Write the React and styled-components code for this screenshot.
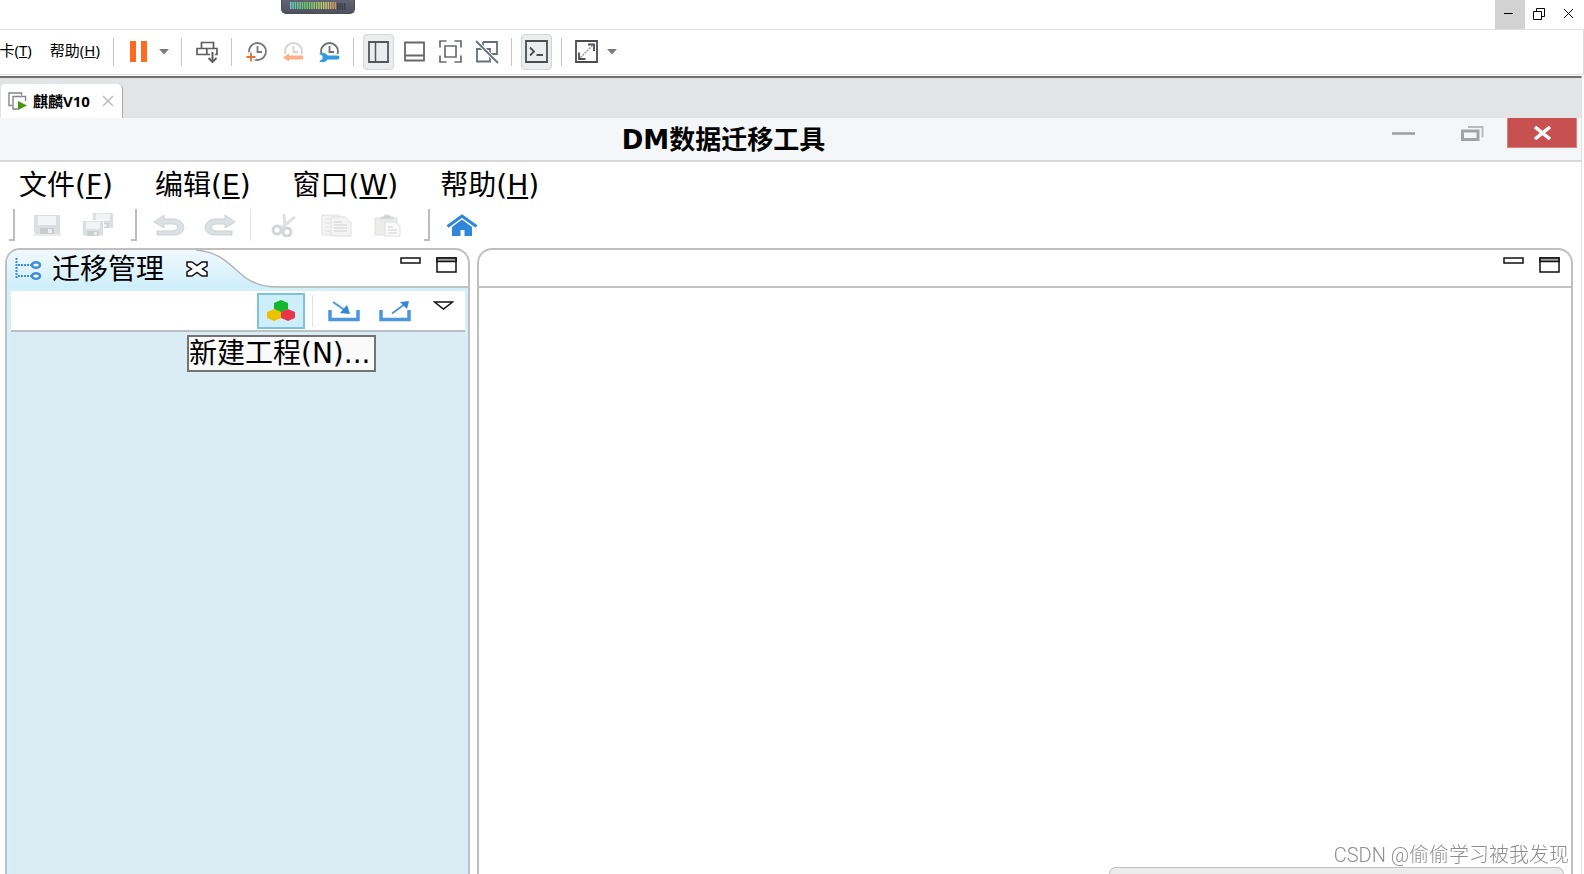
import styled, { createGlobalStyle } from 'styled-components';

const GlobalStyle = createGlobalStyle`
  * {
    box-sizing: border-box;
  }

  body {
    margin: 0;
    background: #fff;
    color: #000;
    overflow: hidden;
  }

  button {
    padding: 0;
    border: 0;
    background: none;
    color: inherit;
    font: inherit;
  }

  svg {
    display: block;
    flex: none;
  }
`;

const hostFont = '"Open Sans", "Noto Sans CJK SC", sans-serif';
const guestFont = '"DejaVu Sans", "Noto Sans CJK SC", sans-serif';

const Page = styled.div`
  display: flex;
  flex-direction: column;
  height: 100vh;
`;

/* host window */

const HostBar = styled.header`
  display: flex;
  justify-content: space-between;
  align-items: flex-start;
  height: 30px;
  padding-left: 281px;
  border-bottom: 1px solid #e2e2e4;
`;

const Meter = styled.div`
  height: 14px;
  padding: 2px 8px;
  border: 1px solid #4a4c58;
  border-top: 0;
  border-radius: 0 0 5px 5px;
  background: linear-gradient(#626473, #4f5160);
`;

const HostControls = styled.div`
  display: flex;
`;

const HostControl = styled.button`
  display: flex;
  align-items: center;
  justify-content: center;
  width: ${(p) => (p.$last ? 29 : 30)}px;
  height: 29px;
  padding: 0 3px 2px 0;
  background: ${(p) => (p.$hover ? '#d2d2d2' : 'transparent')};
`;

const HostToolbar = styled.div`
  display: flex;
  align-items: center;
  gap: 5px;
  height: 45px;
  border-bottom: 1px solid #dedede;
  border-right: 1px solid #dedede;
`;

const HostMenu = styled.nav`
  display: flex;
  justify-content: flex-end;
  gap: 18px;
  width: 100px;
  margin-right: 4px;
  padding-bottom: 4px;
  overflow: hidden;
  font: 15px/20px "Noto Sans", "Noto Sans CJK SC", sans-serif;

  button {
    flex: none;
  }
`;

const ToolDivider = styled.span`
  width: 1px;
  height: 28px;
  margin: 0 4px;
  background: #c6c6c6;
`;

const ToolButton = styled.button`
  display: flex;
  align-items: center;
  justify-content: center;
  width: 31px;
  height: 36px;
  padding-bottom: 1px;
  border: 1px solid ${(p) => (p.$pressed ? '#d3d5d6' : 'transparent')};
  border-radius: 4px;
  background: ${(p) => (p.$pressed ? '#ebeced' : 'transparent')};
`;

const CaretButton = styled.button`
  width: 13px;
  height: 36px;
`;

const HostBody = styled.div`
  display: flex;
  flex-direction: column;
  flex: 1;
  min-height: 0;
  margin: 1px 2px 0 0;
  border-top: 2px solid #707070;
  border-right: 1px solid #e2e2e2;
`;

const TabStrip = styled.div`
  display: flex;
  align-items: flex-end;
  height: 40px;
  padding-left: 1px;
  background: #e3e4e6;
`;

const VmTab = styled.div`
  display: flex;
  align-items: center;
  height: 34px;
  padding: 0 8px 0 7px;
  border-right: 1px solid #a9a9a9;
  border-radius: 4px 5px 0 0;
  background: #fff;
  font: bold 15px/20px ${hostFont};

  span {
    margin: 0 12px 0 6px;
  }
`;

/* guest application */

const TitleBar = styled.header`
  display: flex;
  align-items: flex-start;
  height: 44px;
  border-bottom: 2px solid #d8d8d8;
  background: #f4f6f8;
`;

const Title = styled.h1`
  flex: 1;
  margin: 0;
  padding-left: 78px;
  text-align: center;
  font: bold 26px/44px ${guestFont};
`;

const GuestControl = styled.button`
  display: flex;
  align-items: center;
  justify-content: center;
  width: ${(p) => (p.$danger ? 70 : 69)}px;
  height: 30px;
  margin-right: ${(p) => (p.$danger ? 4 : 0)}px;
  border: ${(p) => (p.$danger ? '1px solid #d98080' : 0)};
  border-top: 0;
  background: ${(p) => (p.$danger ? '#c75050' : 'transparent')};
`;

const GuestMenu = styled.nav`
  display: flex;
  gap: 42px;
  padding: 4px 19px 0;
  font: 28px/40px ${guestFont};

  u {
    text-decoration-thickness: 2px;
    text-underline-offset: 2px;
  }
`;

const IconBar = styled.div`
  display: flex;
  align-items: center;
  height: 42px;
  padding: 0 1px 4px;
`;

const Bracket = styled.span`
  width: 6px;
  height: 32px;
  margin: 0 6px 0 8px;
  border: solid #bdbdbd;
  border-width: 0 2px 2px 0;
`;

const Rule = styled.span`
  width: 1px;
  height: 32px;
  margin: ${(p) => (p.$spaced ? '0 3px 0 5px' : 0)};
  background: #e2e2e2;
`;

const IconButton = styled.button`
  display: flex;
  align-items: ${(p) => (p.$top ? 'flex-start' : 'center')};
  justify-content: center;
  width: ${(p) => p.$width || 51}px;
  height: 36px;
  padding-top: ${(p) => (p.$top ? 6 : 0)}px;
  border: 2px solid ${(p) => (p.$active ? '#7cc3dd' : 'transparent')};
  background: ${(p) => (p.$active ? '#cfeefb' : 'transparent')};
`;

const Workbench = styled.main`
  display: grid;
  grid-template-columns: minmax(0, 465fr) minmax(0, 1096fr);
  gap: 7px;
  flex: 1;
  min-height: 0;
  padding: 0 8px 0 5px;
`;

const Panel = styled.section`
  display: flex;
  flex-direction: column;
  border: 2px solid #bfbfbf;
  border-bottom: 0;
  border-radius: 15px 15px 0 0;
  background: #fff;
`;

const PanelHead = styled.div`
  display: flex;
  height: 38px;
`;

const PanelTab = styled.div`
  position: relative;
  display: flex;
  align-items: center;
  padding: 0 70px 0 8px;
  border-radius: 13px 0 0 0;
  background: linear-gradient(#f1f9fd, #cfeefb);
  font: 28px/36px ${guestFont};

  span {
    margin: 0 22px 0 10px;
    padding-top: 2px;
  }

  button {
    z-index: 1;
  }
`;

const TabEdge = styled.svg`
  position: absolute;
  top: 0;
  right: 0;
`;

const PanelActions = styled.div`
  display: flex;
  flex: 1;
  align-items: flex-start;
  justify-content: flex-end;
  gap: 15px;
  padding: 7px 11px 0 0;
  border-bottom: 2px solid #c2c2c2;
`;

const PanelBody = styled.div`
  display: flex;
  flex-direction: column;
  flex: 1;
  padding: 3px 3px 0 4px;
  background: #d3f0fb;
`;

const ViewToolbar = styled.div`
  display: flex;
  align-items: flex-start;
  justify-content: flex-end;
  height: 41px;
  padding: 2px 0 0;
  border-bottom: 2px solid #b9bfc2;
  background: #fff;
`;

const Tree = styled.div`
  position: relative;
  flex: 1;
  background: #daedf5;
`;

const Tooltip = styled.div`
  position: absolute;
  top: 3px;
  left: 176px;
  padding: 0 3px 0 0;
  border: 2px solid #747474;
  background: #fafafa;
  font: 28px/33px ${guestFont};
  white-space: nowrap;
`;

const Dock = styled.div`
  position: fixed;
  right: 20px;
  bottom: 0;
  width: 455px;
  height: 7px;
  border: 1px solid #c0c0c0;
  border-bottom: 0;
  border-radius: 10px 10px 0 0;
  background: #ececec;
`;

const Watermark = styled.div`
  position: fixed;
  right: 15px;
  bottom: 6px;
  color: #8e8e8e;
  font: 300 20px/26px Roboto, "Noto Sans CJK SC", sans-serif;
`;

const Caret = () => (
  <svg width="10" height="6">
    <path d="M0 0h10L5 5.5z" fill="#7b7b7b" />
  </svg>
);

const meterColor = (i) => {
  if (i > 19) return '#3e404c';
  return `hsl(${170 - i * 7.5} 50% 60%)`;
};

const MeterBars = () => (
  <svg width="56" height="8">
    {Array.from({ length: 24 }, (_, i) => (
      <rect key={i} x={i * 2.35} y={i > 19 ? 1 : 0} width="1.5" height="7" fill={meterColor(i)} />
    ))}
  </svg>
);

const SendKeys = () => (
  <svg width="22" height="22" fill="none" stroke="#5b5d60" strokeWidth="1.7">
    <path d="M5.5 7.5v-6h12v6M1 7.5h20v6H1zM10.8 7.5v6" />
    <path d="M16.5 12v9" stroke="#fff" strokeWidth="5" />
    <path d="M16.500 11v9" strokeWidth="2" />
    <path d="m12.500 17 4 4 4-4" strokeWidth="2" />
  </svg>
);

const Clock = ({ color }) => (
  <>
    <circle cx="11.500" cy="10.500" r="8.500" stroke={color} strokeWidth="1.800" />
    <path d="M11.500 5v6H16" stroke={color} strokeWidth="1.800" />
  </>
);

const SnapshotTake = () => (
  <svg width="22" height="22" fill="none">
    <Clock color="#77797b" />
    <path d="M0 16h10M5 11v10" stroke="#fff" strokeWidth="5" />
    <path d="M.5 16h9M5 11.500v9" stroke="#e3703a" strokeWidth="1.800" />
  </svg>
);

const SnapshotRevert = () => (
  <svg width="22" height="22" fill="none">
    <Clock color="#d2d3d4" />
    <path d="M0 13h22v9H0z" fill="#fff" />
    <path d="m1 16.500 6-4v2h14v4H7v2z" fill="#ffae88" />
  </svg>
);

const SnapshotManage = () => (
  <svg width="22" height="22" fill="none">
    <Clock color="#6d6f71" />
    <path d="M0 13h22v9H0z" fill="#fff" />
    <path
      d="M1 12.500c4-1.500 7-.5 8.500 2H19.500a2 2 0 0 1 0 4H9.500c-1.500 2.500-4.500 3.500-8.500 2l3.500-2.500v-3z"
      fill="#2f9be0"
    />
  </svg>
);

const SidePane = () => (
  <svg width="21" height="22" fill="none" stroke="#545659" strokeWidth="1.800">
    <path d="M1 1h19v20H1z" />
    <path d="M7.500 1v20" strokeWidth="1.500" />
  </svg>
);

const BottomPane = () => (
  <svg width="21" height="22" fill="none" stroke="#66686b" strokeWidth="1.800">
    <path d="M1 1.500h19v18H1zM1 14.500h19" />
  </svg>
);

const FullScreen = () => (
  <svg width="23" height="23" fill="none" stroke="#6a6c6f" strokeWidth="1.700">
    <path d="M1 7.500V1h6.500M15.500 1H22v6.500M22 15.500V22h-6.500M7.500 22H1v-6.500M6 6h11v11H6z" />
  </svg>
);

const Unity = () => (
  <svg width="24" height="24" fill="none" stroke="#64707a" strokeWidth="1.800">
    <path d="M8 2h14v12h-7M8 2v7H2v12.500h13V9H8" />
    <path d="m1 1 22 22" stroke="#fff" strokeWidth="4" />
    <path d="m1 1 22 22" strokeWidth="1.800" />
  </svg>
);

const Console = () => (
  <svg width="23" height="23" fill="none" stroke="#4b4d50" strokeWidth="1.800">
    <path d="M1 1h21v21H1z" />
    <path d="m5 7.500 4 4-4 4M11.500 15H18" />
  </svg>
);

const Stretch = () => (
  <svg width="23" height="23" fill="none" stroke="#4b4d50" strokeWidth="1.800">
    <path d="M1 1h21v21H1zM13 4.500h6V11M4 12.500V19h6.500" />
    <path d="m5.500 17.500 12-12" strokeWidth="1.500" strokeDasharray="2 1" stroke="#999" />
  </svg>
);

const VmIcon = () => (
  <svg width="19" height="18" fill="none" stroke="#858789" strokeWidth="1.400">
    <path d="M4 13.500H1V1h12.500v2.500" />
    <path d="M10 17H5V4.500h12.500V9" />
    <path d="m10 9 9 4.500-9 4.500z" fill="#45980f" stroke="none" />
  </svg>
);

const GuestRestore = () => (
  <svg width="23" height="15" fill="none">
    <path d="M7 1h14.500v10.500" stroke="#b9babb" strokeWidth="2" />
    <path d="M1.500 5h15.500v8.500H1.500z" stroke="#a2a3a4" strokeWidth="3" />
  </svg>
);

const FloppyShape = () => (
  <>
    <path d="M1 0h26v19H3l-2-2z" fill="#dcdee0" />
    <path d="M5 1h18v9H5z" fill="#f3f4f5" />
    <path d="M7 13h14v6H7z" fill="#c9cccf" />
    <path d="M15 14h4v4h-4z" fill="#eceeef" />
  </>
);

const Save = () => (
  <svg width="28" height="21">
    <FloppyShape />
    <path d="M0 20h28" stroke="#ececec" strokeWidth="2" />
  </svg>
);

const SaveAll = () => (
  <svg width="32" height="24">
    <g transform="translate(10 0) scale(.78)"><FloppyShape /></g>
    <g transform="translate(0 8) scale(.78)">
      <path d="M0-1h28v21H0z" fill="#fff" />
      <FloppyShape />
    </g>
  </svg>
);

const Undo = ({ flip }) => (
  <svg width="32" height="23" viewBox="0 0 32 23">
    <path
      transform={flip ? 'translate(32 0) scale(-1 1)' : undefined}
      d="M1 8 11 1v4h10c13 1 13 16 0 16H4v-4h16c6-1 6-7 0-7h-9v4z"
      fill="#dce0e2"
      stroke="#cdd1d4"
    />
  </svg>
);

const Cut = () => (
  <svg width="26" height="24" fill="none" stroke="#d3d6d8">
    <path d="m13 1 1 13M24 4 10 15" strokeWidth="3" stroke="#dfe1e3" />
    <circle cx="6" cy="17" r="4" strokeWidth="3" />
    <circle cx="16" cy="19" r="4" strokeWidth="3" />
  </svg>
);

const Copy = () => (
  <svg width="31" height="23" fill="#f4f4f4" stroke="#dfe0e1">
    <path d="M1 1h17v20H1zM4 5h5M4 9h5M4 13h5M4 17h5" />
    <path d="M10 3h14l6 5v14H10z" />
    <path d="M13 8h8M13 11h13M13 14h13M13 17h13" stroke="#d0d1d2" />
  </svg>
);

const Paste = () => (
  <svg width="27" height="23" fill="#ececeb" stroke="#dfe0e1">
    <path d="M1 4h22v17H1z" />
    <path d="M6 5V3h3l2-2h4l2 2h3v2z" fill="#d0d3d3" />
    <path d="M11 8h10l5 4v10H11z" fill="#fafafa" />
    <path d="M14 13h5M14 16h9M14 19h9" stroke="#cfd0d1" />
  </svg>
);

const Home = () => (
  <svg width="32" height="23">
    <path d="M1.500 12.500 16 2l14.500 10.500" fill="none" stroke="#2f86da" strokeWidth="3" />
    <path d="M6 13 16 5.500 26 13v9h-7.500v-6h-4v6H6z" fill="#2f86da" />
  </svg>
);

const TreeIcon = () => (
  <svg width="27" height="23" fill="none" stroke="#3d8fdc">
    <path d="M1.500 0v20" strokeWidth="2" strokeDasharray="2 1" />
    <path d="M3 7h13M3 18h13" strokeWidth="2" strokeDasharray="2 1" />
    <ellipse cx="21" cy="7" rx="4" ry="2.800" strokeWidth="2.500" fill="#fff" />
    <ellipse cx="21" cy="18" rx="4" ry="2.800" strokeWidth="2.500" fill="#fff" />
  </svg>
);

const ViewClose = () => (
  <svg width="22" height="16" fill="#fff" stroke="#111" strokeWidth="1.500">
    <path d="M1 1h5l5 3.500L16 1h5v4l-4.500 3 4.500 3v4h-5l-5-3.500L6 15H1v-4l4.500-3L1 5z" />
  </svg>
);

const TabCurve = () => (
  <TabEdge width="82" height="38">
    <path d="M0 0C26 2 34 16 50 28C60 35 70 37 82 37V0z" fill="#fff" />
    <path d="M0 0C26 2 34 16 50 28C60 35 70 37 82 37" fill="none" stroke="#b3b3b3" strokeWidth="1.500" />
  </TabEdge>
);

const MinimizeIcon = () => (
  <svg width="21" height="7" fill="#fff" stroke="#111" strokeWidth="1.500">
    <path d="M1 1h19v5H1z" />
  </svg>
);

const MaximizeIcon = () => (
  <svg width="21" height="16" fill="#fff" stroke="#111" strokeWidth="1.500">
    <path d="M1 1h19v14H1z" />
    <path d="M1 1h19v3.500H1z" fill="#a0a0a0" />
  </svg>
);

const NewProject = () => (
  <svg width="30" height="22">
    <path d="m15 0 7 3v6l-7 3.500L8 9V3z" fill="#12b82c" />
    <path d="m8 9 7 3v6l-7 3-7-3v-6z" fill="#ecc100" />
    <path d="m22 9 7 3v6l-7 3-7-3v-6z" fill="#e63649" />
  </svg>
);

const Tray = ({ out }) => (
  <svg width="32" height="22" fill="none" stroke="#4a97df">
    <path d="M2 10v9.500h28V10" strokeWidth="3.500" />
    {out ? (
      <>
        <path d="M13 13.500 26 4" strokeWidth="2" />
        <path d="m21 2 9-1-2 8z" fill="#2f86da" stroke="none" />
      </>
    ) : (
      <>
        <path d="m5 2 13 9" strokeWidth="2" />
        <path d="m19 5 3 9-10-1z" fill="#2f86da" stroke="none" />
      </>
    )}
  </svg>
);

const ViewMenu = () => (
  <svg width="21" height="9" fill="#fff" stroke="#111" strokeWidth="1.500">
    <path d="M1.500 1h18l-9 7z" />
  </svg>
);

const guestMenus = [
  ['文件', 'F'],
  ['编辑', 'E'],
  ['窗口', 'W'],
  ['帮助', 'H'],
];

const PanelControls = () => (
  <PanelActions>
    <button aria-label="最小化"><MinimizeIcon /></button>
    <button aria-label="最大化"><MaximizeIcon /></button>
  </PanelActions>
);

const App = () => {
  return (
    <Page>
      <GlobalStyle />

      <HostBar>
        <Meter><MeterBars /></Meter>
        <HostControls>
          <HostControl $hover aria-label="最小化">
            <svg width="11" height="11"><path d="M1 5.500h9" stroke="#000" /></svg>
          </HostControl>
          <HostControl aria-label="还原">
            <svg width="12" height="12" fill="none" stroke="#000">
              <path d="M.5 3.500h8v8h-8zM3.500 3V.5h8v8H9" />
            </svg>
          </HostControl>
          <HostControl $last aria-label="关闭">
            <svg width="11" height="11"><path d="m1 1 9 9m0-9-9 9" stroke="#000" /></svg>
          </HostControl>
        </HostControls>
      </HostBar>

      <HostToolbar>
        <HostMenu>
          <button>卡(<u>T</u>)</button>
          <button>帮助(<u>H</u>)</button>
        </HostMenu>
        <ToolDivider />
        <ToolButton aria-label="挂起">
          <svg width="17" height="21" fill="#ff6a1f">
            <path d="M0 0h6v21H0zM11 0h6v21h-6z" />
          </svg>
        </ToolButton>
        <CaretButton aria-label="电源"><Caret /></CaretButton>
        <ToolDivider />
        <ToolButton aria-label="发送按键"><SendKeys /></ToolButton>
        <ToolDivider />
        <ToolButton aria-label="拍摄快照"><SnapshotTake /></ToolButton>
        <ToolButton aria-label="恢复快照"><SnapshotRevert /></ToolButton>
        <ToolButton aria-label="管理快照"><SnapshotManage /></ToolButton>
        <ToolDivider />
        <ToolButton $pressed aria-label="侧栏"><SidePane /></ToolButton>
        <ToolButton aria-label="缩略图栏"><BottomPane /></ToolButton>
        <ToolButton aria-label="全屏"><FullScreen /></ToolButton>
        <ToolButton aria-label="Unity"><Unity /></ToolButton>
        <ToolDivider />
        <ToolButton $pressed aria-label="控制台"><Console /></ToolButton>
        <ToolDivider />
        <ToolButton aria-label="拉伸"><Stretch /></ToolButton>
        <CaretButton aria-label="拉伸选项"><Caret /></CaretButton>
      </HostToolbar>

      <HostBody>
        <TabStrip>
          <VmTab>
            <VmIcon />
            <span>麒麟V10</span>
            <button aria-label="关闭标签">
              <svg width="12" height="12">
                <path d="m1 1 10 10m0-10L1 11" stroke="#bdbdbd" strokeWidth="1.500" />
              </svg>
            </button>
          </VmTab>
        </TabStrip>

        <TitleBar>
          <Title>DM数据迁移工具</Title>
          <GuestControl aria-label="最小化">
            <svg width="23" height="3"><path d="M0 1.500h23" stroke="#9c9d9e" strokeWidth="2.500" /></svg>
          </GuestControl>
          <GuestControl aria-label="还原"><GuestRestore /></GuestControl>
          <GuestControl $danger aria-label="关闭">
            <svg width="19" height="14">
              <path d="m2 1 15 12m0-12L2 13" stroke="#fff" strokeWidth="3.500" />
            </svg>
          </GuestControl>
        </TitleBar>

        <GuestMenu>
          {guestMenus.map(([label, key]) => (
            <button key={key}>{label}(<u>{key}</u>)</button>
          ))}
        </GuestMenu>

        <IconBar>
          <Bracket />
          <IconButton aria-label="保存"><Save /></IconButton>
          <IconButton aria-label="全部保存"><SaveAll /></IconButton>
          <Bracket />
          <IconButton aria-label="撤销"><Undo /></IconButton>
          <IconButton aria-label="重做"><Undo flip /></IconButton>
          <Rule $spaced />
          <IconButton $width={59} aria-label="剪切"><Cut /></IconButton>
          <IconButton $width={46} aria-label="复制"><Copy /></IconButton>
          <IconButton $width={57} aria-label="粘贴"><Paste /></IconButton>
          <Bracket />
          <IconButton aria-label="主页"><Home /></IconButton>
        </IconBar>

        <Workbench>
          <Panel>
            <PanelHead>
              <PanelTab>
                <TabCurve />
                <TreeIcon />
                <span>迁移管理</span>
                <button aria-label="关闭视图"><ViewClose /></button>
              </PanelTab>
              <PanelControls />
            </PanelHead>
            <PanelBody>
              <ViewToolbar>
                <IconButton $active $width={48} aria-label="新建工程"><NewProject /></IconButton>
                <IconButton $width={14} as="span"><Rule /></IconButton>
                <IconButton $width={49} aria-label="导入"><Tray /></IconButton>
                <IconButton $width={54} aria-label="导出"><Tray out /></IconButton>
                <IconButton $top $width={43} aria-label="视图菜单"><ViewMenu /></IconButton>
              </ViewToolbar>
              <Tree>
                <Tooltip role="tooltip">新建工程(N)...</Tooltip>
              </Tree>
            </PanelBody>
          </Panel>

          <Panel>
            <PanelHead>
              <PanelControls />
            </PanelHead>
          </Panel>
        </Workbench>
      </HostBody>

      <Dock />
      <Watermark>CSDN @偷偷学习被我发现</Watermark>
    </Page>
  );
};

export default App;
